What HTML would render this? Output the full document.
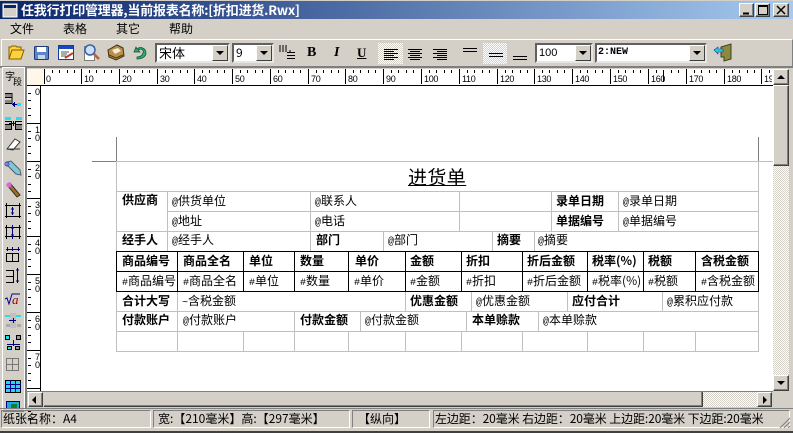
<!DOCTYPE html>
<html><head><meta charset="utf-8"><style>
html,body{margin:0;padding:0}
body{width:793px;height:433px;position:relative;overflow:hidden;background:#d4d0c8;font-family:"Liberation Sans","WenQuanYi Zen Hei","Noto Sans CJK SC",sans-serif;font-size:12px;color:#000}
.a{position:absolute}
.t{position:absolute;white-space:nowrap;line-height:14px;font-size:12px;font-family:"WenQuanYi Zen Hei","Noto Sans CJK SC",sans-serif}
.t i{font:normal 10px "Liberation Mono",monospace}
.b{font-weight:bold}
.btn{position:absolute;box-sizing:border-box;background:#d4d0c8;border:1px solid;border-color:#fff #404040 #404040 #fff;box-shadow:inset -1px -1px #808080}
.d{position:absolute;background:repeating-conic-gradient(#d4d0c8 0 25%,#fff 0 50%) 0 0/2px 2px}
.combo{position:absolute;box-sizing:border-box;height:20px;background:#fff;border:2px solid;border-color:#606060 #e8e6e0 #e8e6e0 #606060}
.combo i{position:absolute;right:0;top:0;width:16px;height:16px;box-sizing:border-box;background:#d4d0c8;border:1px solid;border-color:#fff #404040 #404040 #fff}
.combo i:after{content:"";position:absolute;left:3px;top:5px;border:4px solid transparent;border-top:4px solid #000;border-bottom:0}
.sunk{position:absolute;box-sizing:border-box;border:1px solid;border-color:#808080 #fff #fff #808080;height:18px;top:410px}
</style></head><body>
<!-- title bar -->
<div class="a" style="left:0;top:1px;width:793px;height:18px;background:linear-gradient(90deg,#0a246a,#a6caf0)"></div>
<div class="t b" style="left:21px;top:3px;color:#fff;font-size:13px;letter-spacing:-.2px">任我行打印管理器,当前报表名称:[折扣进货.Rwx]</div>
<div class="btn" style="left:739px;top:3px;width:15px;height:14px"></div>
<div class="btn" style="left:755px;top:3px;width:15px;height:14px"></div>
<div class="btn" style="left:773px;top:3px;width:16px;height:14px"></div>
<!-- menu -->
<div class="t" style="left:10px;top:22px">文件</div>
<div class="t" style="left:63px;top:22px">表格</div>
<div class="t" style="left:116px;top:22px">其它</div>
<div class="t" style="left:169px;top:22px">帮助</div>
<!-- toolbar frame -->
<div class="a" style="left:1px;top:39px;width:790px;height:26px;border:1px solid;border-color:#fff #808080 #808080 #fff"></div>
<div class="a" style="left:0;top:66px;width:793px;height:2px;background:#808080"></div>
<div class="d" style="left:378px;top:43px;width:25px;height:21px"></div>
<div class="d" style="left:483px;top:43px;width:24px;height:21px"></div>
<div class="combo" style="left:155px;top:43px;width:75px"><span class="t" style="left:2px;top:1px;font-size:13px">宋体</span><i></i></div>
<div class="combo" style="left:232px;top:43px;width:42px"><span class="t" style="left:2px;top:1px">9</span><i></i></div>
<div class="combo" style="left:535px;top:43px;width:58px"><span class="t" style="left:2px;top:1px;font-size:11px;font-family:'Liberation Sans',sans-serif">100</span><i></i></div>
<div class="combo" style="left:595px;top:43px;width:112px"><span class="t" style="left:1px;top:1px;font-family:'Liberation Mono',monospace;font-size:10px;font-weight:bold">2:NEW</span><i></i></div>
<div class="t" style="left:307px;top:46px;font-family:'Liberation Serif',serif;font-weight:bold;font-size:14px">B</div>
<div class="t" style="left:334px;top:46px;font-family:'Liberation Serif',serif;font-weight:bold;font-style:italic;font-size:14px">I</div>
<div class="t" style="left:357px;top:46px;font-family:'Liberation Serif',serif;font-weight:bold;font-size:13px;text-decoration:underline">U</div>
<!-- left toolbar -->
<div class="a" style="left:2px;top:67px;width:21px;height:343px;border:1px solid;border-color:#fff #fff #808080 #fff"></div>
<div class="a" style="left:25px;top:68px;width:2px;height:340px;background:#808080"></div>
<div class="t" style="left:5px;top:69px;font-size:10px">字</div>
<div class="t" style="left:13px;top:75px;font-size:9px">段</div>
<!-- page -->
<div class="a" style="left:27px;top:69px;width:746px;height:322px;background:#fff;overflow:hidden">
<div class="a" style="left:0;top:0;width:16px;height:16px;background:#fff8ea"></div>
<div class="a" style="left:0;top:16px;width:746px;height:1px;background:#000"></div>
<div class="a" style="left:13px;top:16px;width:1px;height:306px;background:#000"></div>
</div>
<svg class="a" style="left:0;top:0" width="793" height="433" viewBox="0 0 793 433" font-family="Liberation Sans,sans-serif" font-size="9">
<defs>
<g id="hm" shape-rendering="crispEdges" stroke="#000"><path d="M.5 0V15M8.5 1V4M15.5 1V4M23.5 1V4M30.5 1V4"/></g>
<g id="vm" shape-rendering="crispEdges" stroke="#000"><path d="M0 .5H13M1 8.5H4M1 15.5H4M1 23.5H4M1 30.5H4"/></g>
<clipPath id="c1"><rect x="43" y="69" width="729" height="16"/></clipPath>
<clipPath id="c2"><rect x="3" y="395" width="20" height="14"/></clipPath>
</defs>
<g clip-path="url(#c1)">
<use href="#hm" x="44" y="69"/><use href="#hm" x="81" y="69"/><use href="#hm" x="119" y="69"/><use href="#hm" x="157" y="69"/><use href="#hm" x="194" y="69"/><use href="#hm" x="232" y="69"/><use href="#hm" x="270" y="69"/><use href="#hm" x="308" y="69"/><use href="#hm" x="345" y="69"/><use href="#hm" x="383" y="69"/><use href="#hm" x="421" y="69"/><use href="#hm" x="459" y="69"/><use href="#hm" x="497" y="69"/><use href="#hm" x="534" y="69"/><use href="#hm" x="572" y="69"/><use href="#hm" x="610" y="69"/><use href="#hm" x="648" y="69"/><use href="#hm" x="686" y="69"/><use href="#hm" x="724" y="69"/><use href="#hm" x="761" y="69"/>
<g letter-spacing="-.3">
<text x="46" y="82">0</text><text x="84" y="82">10</text><text x="122" y="82">20</text><text x="160" y="82">30</text><text x="197" y="82">40</text><text x="235" y="82">50</text><text x="273" y="82">60</text><text x="311" y="82">70</text><text x="348" y="82">80</text><text x="386" y="82">90</text><text x="424" y="82">100</text><text x="462" y="82">110</text><text x="500" y="82">120</text><text x="537" y="82">130</text><text x="575" y="82">140</text><text x="613" y="82">150</text><text x="651" y="82">160</text><text x="689" y="82">170</text><text x="727" y="82">180</text><text x="764" y="82">190</text>
</g>
</g>
<path d="M663.5 70V82" stroke="#000" stroke-width="1" shape-rendering="crispEdges"/>
<use href="#vm" x="27" y="85"/><use href="#vm" x="27" y="123"/><use href="#vm" x="27" y="161"/><use href="#vm" x="27" y="198"/><use href="#vm" x="27" y="236"/><use href="#vm" x="27" y="274"/><use href="#vm" x="27" y="312"/><use href="#vm" x="27" y="350"/><use href="#vm" x="27" y="388" />
<text x="35" y="95">0</text>
<text x="35" y="133">1</text><text x="35" y="141">0</text>
<text x="35" y="171">2</text><text x="35" y="179">0</text>
<text x="35" y="208">3</text><text x="35" y="216">0</text>
<text x="35" y="246">4</text><text x="35" y="254">0</text>
<text x="35" y="284">5</text><text x="35" y="292">0</text>
<text x="35" y="322">6</text><text x="35" y="330">0</text>
<text x="35" y="360">7</text><text x="35" y="368">0</text>
<!-- table lines -->
<g stroke="#c0c0c0" shape-rendering="crispEdges" fill="none">
<path d="M116.5 161V351M758.5 161V351"/>
<path d="M116 161.5H773M116 191.5H759M167 211.5H759M116 231.5H759M116 291.5H759M116 311.5H759M116 331.5H759M116 351.5H759"/>
<path d="M167.5 191V251M310.5 191V251M459.5 191V231M551.5 191V231M618.5 191V231M383.5 231V251M492.5 231V251M534.5 231V251"/>
<path d="M177.5 291V351M405.5 291V311M471.5 291V311M567.5 291V311M662.5 291V311M294.5 311V351M360.5 311V331M466.5 311V331M538.5 311V331M243.5 331V351M348.5 331V351M405.5 331V351M461.5 331V351M522.5 331V351M587.5 331V351M643.5 331V351M695.5 331V351"/>
</g>
<path d="M92 161.5H116M116.5 137V161M758.5 137V161" stroke="#808080" shape-rendering="crispEdges"/>
<g stroke="#000" shape-rendering="crispEdges" fill="none">
<path d="M116.5 251V291M177.5 251V291M243.5 251V291M294.5 251V291M348.5 251V291M405.5 251V291M461.5 251V291M522.5 251V291M587.5 251V291M643.5 251V291M695.5 251V291M758.5 251V291"/>
<path d="M116 251.5H759M116 271.5H759M116 291.5H759"/>
</g>
<!-- top toolbar icons -->
<path d="M9 59l3-9h12l-3 9zM9 59V47h2l1-1h4l1 1h4v3" fill="#ffd23c" stroke="#806000"/>
<rect x="34.5" y="46.5" width="14" height="13" rx="1" fill="#5a86c8" stroke="#203878"/><rect x="37" y="47" width="9" height="5" fill="#fff"/><rect x="38" y="55" width="7" height="4" fill="#c8d4e8"/>
<rect x="58.5" y="45.5" width="15" height="14" fill="#fff" stroke="#1040a0"/><rect x="59" y="46" width="14" height="3" fill="#1848c0"/><path d="M61 52h8M61 54h6M61 56h5" stroke="#555"/><path d="M65 58l8-5" stroke="#c04030" stroke-width="2"/>
<rect x="84.5" y="46.5" width="10" height="14" fill="#fff" stroke="#808080"/><circle cx="90" cy="50" r="5" fill="#c8e0f8" stroke="#4060a0" stroke-width="1.5"/><path d="M94 54l5 5" stroke="#c06030" stroke-width="2.5"/>
<path d="M108 50l9-5 6 3 1 8-8 4-7-3z" fill="#b89048" stroke="#403010"/><path d="M112 50l6-2 3 3-6 3z" fill="#f4ecd8"/><path d="M109 55l7 3 7-3" stroke="#503810" fill="none"/>
<path d="M136 47l-2 5 6 0-2-2c3-2 6 0 5 3-1 3-3 4-6 4v2c6 0 9-3 9-6 0-5-6-7-9-4z" fill="#28b070" stroke="#104830" stroke-width=".7"/>
<path d="M280 45v7M283 45v7M286 45v7M290 50v2M287 52.5h8M287 55.5h8M287 58.5h8" stroke="#000" shape-rendering="crispEdges"/>
<g stroke="#000" shape-rendering="crispEdges">
<path d="M384 49.5h14M384 51.5h10M384 53.5h14M384 55.5h10M384 57.5h14M384 59.5h10"/>
<path d="M408 49.5h14M410 51.5h10M408 53.5h14M410 55.5h10M408 57.5h14M410 59.5h10"/>
<path d="M433 49.5h14M437 51.5h10M433 53.5h14M437 55.5h10M433 57.5h14M437 59.5h10"/>
<path d="M463 48.5h14M463 51.5h14"/><path d="M489 53.5h14M489 56.5h14"/><path d="M513 56.5h14M513 59.5h14"/>
</g>
<path d="M721 47l10-3v15l-7 2V57h-3z" fill="#8a8a40" stroke="#404020"/><path d="M714 50l4-3v2h5v3h-5v2z" fill="#20d0e0" stroke="#1040a0" stroke-width=".6"/>
<!-- title buttons -->
<path d="M743 13.5h6" stroke="#000" stroke-width="2"/><rect x="758.5" y="5.5" width="9" height="9" fill="none" stroke="#000"/><path d="M758 6.5h10" stroke="#000"/>
<path d="M777 6l8 8M785 6l-8 8" stroke="#000" stroke-width="1.5"/>
<rect x="3" y="4" width="14" height="13" fill="#d4d0c8" stroke="#fff"/><rect x="4" y="5" width="12" height="3" fill="#0a246a"/>
<!-- left toolbar icons -->
<g shape-rendering="crispEdges" stroke-width="1" fill="none">
<rect x="5" y="94" width="6" height="3" fill="#888"/><rect x="5" y="100" width="6" height="3" fill="#888"/><path d="M5 93.5h7v10h-7M5 97.5h7" stroke="#000"/><path d="M12 104.5h5M14.5 102v5M13.5 103v3" stroke="#000080"/><rect x="17" y="103" width="4" height="3" fill="#20e0f0"/>
<rect x="5" y="117" width="6" height="3" fill="#20e0f0"/><rect x="16" y="117" width="6" height="3" fill="#20e0f0"/><rect x="5" y="125" width="6" height="4" fill="#888"/><rect x="16" y="125" width="6" height="4" fill="#888"/><path d="M5 121.5h6M5 124.5h6M5 129.5h6M11.5 121v9M16 121.5h6M16 124.5h6M16 129.5h6M15.5 121v9" stroke="#000"/><path d="M9 123.5h6M13.5 121v5" stroke="#000080"/>
<path d="M5 205.5h16M5 216.5h16M6.5 203v15M19.5 203v15" stroke="#000"/><path d="M12.5 207v8M11 209h3M11 213h3" stroke="#000080"/>
<path d="M5 227.5h16M5 236.5h16M6.5 225v14M19.5 225v14" stroke="#000"/><path d="M12.5 225v14M11 228h3M11 235h3" stroke="#000080"/>
<path d="M6 249.5h14M7.5 247v4M12.5 247v4M18.5 247v4" stroke="#000080"/><path d="M6.5 253.5h12v8h-12zM12.5 253v8" stroke="#000"/>
<path d="M6 270.5h8M6 276.5h8M6 282.5h8M13.5 270v13" stroke="#000"/><path d="M17.5 268v15M16 270h3M16 281h3" stroke="#000080"/>
<rect x="10" y="313" width="6" height="15" fill="#c0c0c0"/><rect x="5" y="315" width="5" height="2" fill="#20e0f0"/><rect x="16" y="315" width="5" height="2" fill="#20e0f0"/><path d="M9 320.5h7M13.5 318v5" stroke="#000080"/><rect x="6" y="324" width="4" height="3" fill="#aaa"/><rect x="17" y="324" width="4" height="3" fill="#aaa"/>
<rect x="5.5" y="335.5" width="4" height="4" fill="#20e0f0" stroke="#000"/><rect x="16.5" y="335.5" width="4" height="4" fill="#999" stroke="#000"/><rect x="7.5" y="346.5" width="4" height="3" fill="#20e0f0" stroke="#000"/><rect x="15.5" y="346.5" width="4" height="3" fill="#999" stroke="#000"/><path d="M13.5 340v6M7 344.5h13" stroke="#000080"/>
<path d="M6.5 358.5h12v12h-12zM6 364.5h13M12.5 358v13" stroke="#777"/>
<rect x="5.5" y="380.5" width="15" height="12" fill="#20d8f0" stroke="#000"/><path d="M5 384.5h16M5 388.5h16M10.5 380v12M15.5 380v12" stroke="#000080"/>
<g clip-path="url(#c2)"><rect x="6.5" y="401.5" width="13" height="10" fill="#20a8e0" stroke="#000080"/><rect x="11" y="404" width="6" height="5" fill="#108030"/></g>
</g>
<path d="M7 149l8-10 5 3-7 8zM7 149h13" fill="#fff" stroke="#333"/>
<path d="M7 162l4-1 9 9 1 5-5-1-9-9z" fill="#80c8d8" stroke="#506070"/><circle cx="7" cy="164" r="2" fill="none" stroke="#4040d0"/>
<path d="M7 185l3-2 10 12-3 2z" fill="#a07020" stroke="#303030"/><circle cx="9" cy="185" r="2.5" fill="#e060e0"/>
<path d="M5 299l2-1 2 6 3-10h8" stroke="#000090" fill="none"/>
<text x="12" y="304" font-family="Liberation Serif,serif" font-style="italic" font-size="13" fill="#900000">a</text>
</svg>
<!-- v scrollbar -->
<div class="d" style="left:773px;top:166px;width:16px;height:209px"></div>
<div class="btn" style="left:773px;top:69px;width:16px;height:16px"></div>
<div class="a" style="left:777px;top:75px;border:4px solid transparent;border-bottom:4px solid #000;border-top:0"></div>
<div class="btn" style="left:773px;top:85px;width:16px;height:81px"></div>
<div class="btn" style="left:773px;top:375px;width:16px;height:16px"></div>
<div class="a" style="left:777px;top:381px;border:4px solid transparent;border-top:4px solid #000;border-bottom:0"></div>
<!-- h scrollbar -->
<div class="a" style="left:27px;top:391px;width:746px;height:1px;background:#808080"></div>
<div class="d" style="left:703px;top:392px;width:54px;height:15px"></div>
<div class="btn" style="left:28px;top:392px;width:15px;height:15px"></div>
<div class="a" style="left:32px;top:396px;border:4px solid transparent;border-right:4px solid #000;border-left:0"></div>
<div class="btn" style="left:44px;top:392px;width:659px;height:15px;border-top:0;border-left:0"></div>
<div class="btn" style="left:757px;top:392px;width:15px;height:15px"></div>
<div class="a" style="left:763px;top:396px;border:4px solid transparent;border-left:4px solid #000;border-right:0"></div>
<div class="a" style="left:0;top:408px;width:793px;height:1px;background:#808080"></div>
<!-- status -->
<div class="sunk" style="left:1px;width:150px"></div>
<div class="sunk" style="left:153px;width:197px"></div>
<div class="sunk" style="left:352px;width:78px"></div>
<div class="sunk" style="left:433px;width:357px"></div>
<div class="t" style="left:3px;top:412px">纸张名称：A4</div>
<div class="t" style="left:158px;top:412px">宽:【210毫米】高:【297毫米】</div>
<div class="t" style="left:358px;top:412px">【纵向】</div>
<div class="t" style="left:435px;top:412px;letter-spacing:-.1px">左边距：20毫米 右边距：20毫米 上边距:20毫米 下边距:20毫米</div>
<svg class="a" style="left:778px;top:416px" width="12" height="12"><path d="M2 12L12 2M6 12L12 6M10 12L12 10" stroke="#808080" fill="none"/></svg>
<div class="a" style="left:0;top:431px;width:793px;height:2px;background:#404040"></div>
<!-- report -->
<div class="t" style="left:408px;top:167px;font-size:19px;line-height:20px;letter-spacing:.4px;text-decoration:underline;text-underline-offset:1px">进货单</div>
<div class="t b" style="left:122px;top:193px">供应商</div>
<div class="t" style="left:172px;top:194px"><i>@</i>供货单位</div><div class="t" style="left:315px;top:194px"><i>@</i>联系人</div>
<div class="t b" style="left:556px;top:194px">录单日期</div><div class="t" style="left:623px;top:194px"><i>@</i>录单日期</div>
<div class="t" style="left:172px;top:214px"><i>@</i>地址</div><div class="t" style="left:315px;top:214px"><i>@</i>电话</div>
<div class="t b" style="left:556px;top:214px">单据编号</div><div class="t" style="left:623px;top:214px"><i>@</i>单据编号</div>
<div class="t b" style="left:122px;top:233px">经手人</div><div class="t" style="left:172px;top:233px"><i>@</i>经手人</div>
<div class="t b" style="left:316px;top:233px">部门</div><div class="t" style="left:388px;top:233px"><i>@</i>部门</div>
<div class="t b" style="left:497px;top:233px">摘要</div><div class="t" style="left:538px;top:233px"><i>@</i>摘要</div>
<div class="t b" style="left:122px;top:254px">商品编号</div><div class="t b" style="left:183px;top:254px">商品全名</div><div class="t b" style="left:249px;top:254px">单位</div><div class="t b" style="left:300px;top:254px">数量</div><div class="t b" style="left:355px;top:254px">单价</div><div class="t b" style="left:410px;top:254px">金额</div><div class="t b" style="left:466px;top:254px">折扣</div><div class="t b" style="left:527px;top:254px">折后金额</div><div class="t b" style="left:592px;top:254px">税率(%)</div><div class="t b" style="left:648px;top:254px">税额</div><div class="t b" style="left:701px;top:254px">含税金额</div>
<div class="t" style="left:122px;top:274px;width:55px;overflow:hidden"><i>#</i>商品编号</div><div class="t" style="left:183px;top:274px"><i>#</i>商品全名</div><div class="t" style="left:249px;top:274px"><i>#</i>单位</div><div class="t" style="left:300px;top:274px"><i>#</i>数量</div><div class="t" style="left:354px;top:274px"><i>#</i>单价</div><div class="t" style="left:410px;top:274px"><i>#</i>金额</div><div class="t" style="left:466px;top:274px"><i>#</i>折扣</div><div class="t" style="left:527px;top:274px"><i>#</i>折后金额</div><div class="t" style="left:592px;top:274px"><i>#</i>税率(%)</div><div class="t" style="left:648px;top:274px"><i>#</i>税额</div><div class="t" style="left:701px;top:274px"><i>#</i>含税金额</div>
<div class="t b" style="left:122px;top:294px">合计大写</div><div class="t" style="left:182px;top:294px"><i>~</i>含税金额</div><div class="t b" style="left:410px;top:294px">优惠金额</div><div class="t" style="left:476px;top:294px"><i>@</i>优惠金额</div><div class="t b" style="left:572px;top:294px">应付合计</div><div class="t" style="left:667px;top:294px"><i>@</i>累积应付款</div>
<div class="t b" style="left:122px;top:313px">付款账户</div><div class="t" style="left:183px;top:313px"><i>@</i>付款账户</div><div class="t b" style="left:300px;top:313px">付款金额</div><div class="t" style="left:365px;top:313px"><i>@</i>付款金额</div><div class="t b" style="left:472px;top:313px">本单赊款</div><div class="t" style="left:543px;top:313px"><i>@</i>本单赊款</div>
</body></html>
